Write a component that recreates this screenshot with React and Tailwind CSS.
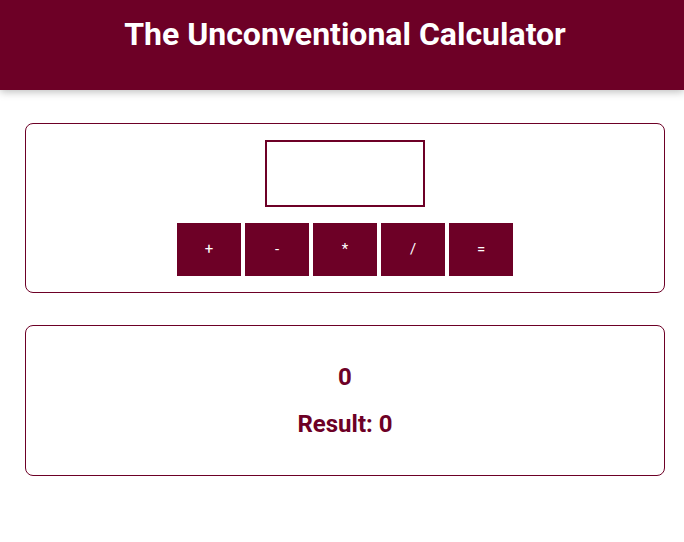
export default function App() {
  const ops = ["+", "-", "*", "/", "="];
  return (
    <div className="min-h-[542px] bg-white" style={{ fontFamily: "Roboto, 'Noto Sans', sans-serif" }}>
      <header className="h-[90px] bg-[#6d0026] pl-[6px] pt-[14px] shadow-[0_2px_8px_rgba(0,0,0,0.26)]">
        <h1 className="text-center text-[32px] font-bold leading-[40px] text-white">The Unconventional Calculator</h1>
      </header>
      <div className="flex flex-col gap-[32px] pl-[25px] pr-[19px] pt-[33px]">
        <section className="flex flex-col items-center gap-[16px] rounded-[8px] border border-[#6d0026] p-[16px]">
          <input type="number" className="h-[67px] w-[160px] border-2 border-[#6d0026] outline-none" />
          <div className="flex gap-[4px]">
            {ops.map((o) => (
              <button key={o} className="h-[53px] w-[64px] bg-[#6d0026] text-[15px] text-white">
                {o}
              </button>
            ))}
          </div>
        </section>
        <section className="flex flex-col items-center gap-[15px] rounded-[8px] border border-[#6d0026] pb-[35px] pt-[35px]">
          <h2 className="text-[24px] font-bold leading-[32px] text-[#6d0026]">0</h2>
          <h2 className="text-[24px] font-bold leading-[32px] text-[#6d0026]">Result: 0</h2>
        </section>
      </div>
    </div>
  );
}
